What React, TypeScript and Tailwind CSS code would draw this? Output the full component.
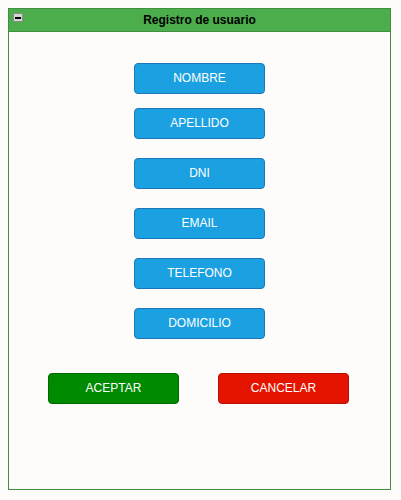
export default function App() {
  const fields = ["NOMBRE", "APELLIDO", "DNI", "EMAIL", "TELEFONO", "DOMICILIO"];

  return (
    <div className="w-[401px] h-[500px] bg-[#fdfcfa] pt-2 pl-2" style={{ fontFamily: '"Liberation Sans", Arial, sans-serif' }}>
      <div className="w-[383px] h-[482px] border border-[#3f8f3f] flex flex-col bg-[#fdfcfa]">
        <div className="h-[23px] bg-[#4cad4c] border-b border-[#3f8f3f] flex items-center relative">
          <div className="absolute left-[4px] top-[4px] w-[10px] h-[9px] bg-[#d4d4d4] border border-[#8a8a8a] flex items-center justify-center">
            <div className="w-[6px] h-[2px] bg-black" />
          </div>
          <div className="flex-1 text-center text-[12px] font-bold text-black leading-none">Registro de usuario</div>
        </div>
        <div className="flex flex-col items-center pt-[31px]">
          {fields.map((f, i) => (
            <button
              key={f}
              className={`w-[131px] h-[31px] pb-[2px] rounded-[4px] bg-[#1ba1e2] border border-[#1a78b8] text-white text-[12px] ${i === 0 ? "" : i === 1 ? "mt-[14px]" : "mt-[19px]"}`}
            >
              {f}
            </button>
          ))}
        </div>
        <div className="flex pl-[39px] gap-[39px] mt-[34px]">
          <button className="w-[131px] h-[31px] pb-[2px] rounded-[4px] bg-[#008a00] border border-[#006a00] text-white text-[12px]">ACEPTAR</button>
          <button className="w-[131px] h-[31px] pb-[2px] rounded-[4px] bg-[#e51400] border border-[#b81000] text-white text-[12px]">CANCELAR</button>
        </div>
      </div>
    </div>
  );
}
